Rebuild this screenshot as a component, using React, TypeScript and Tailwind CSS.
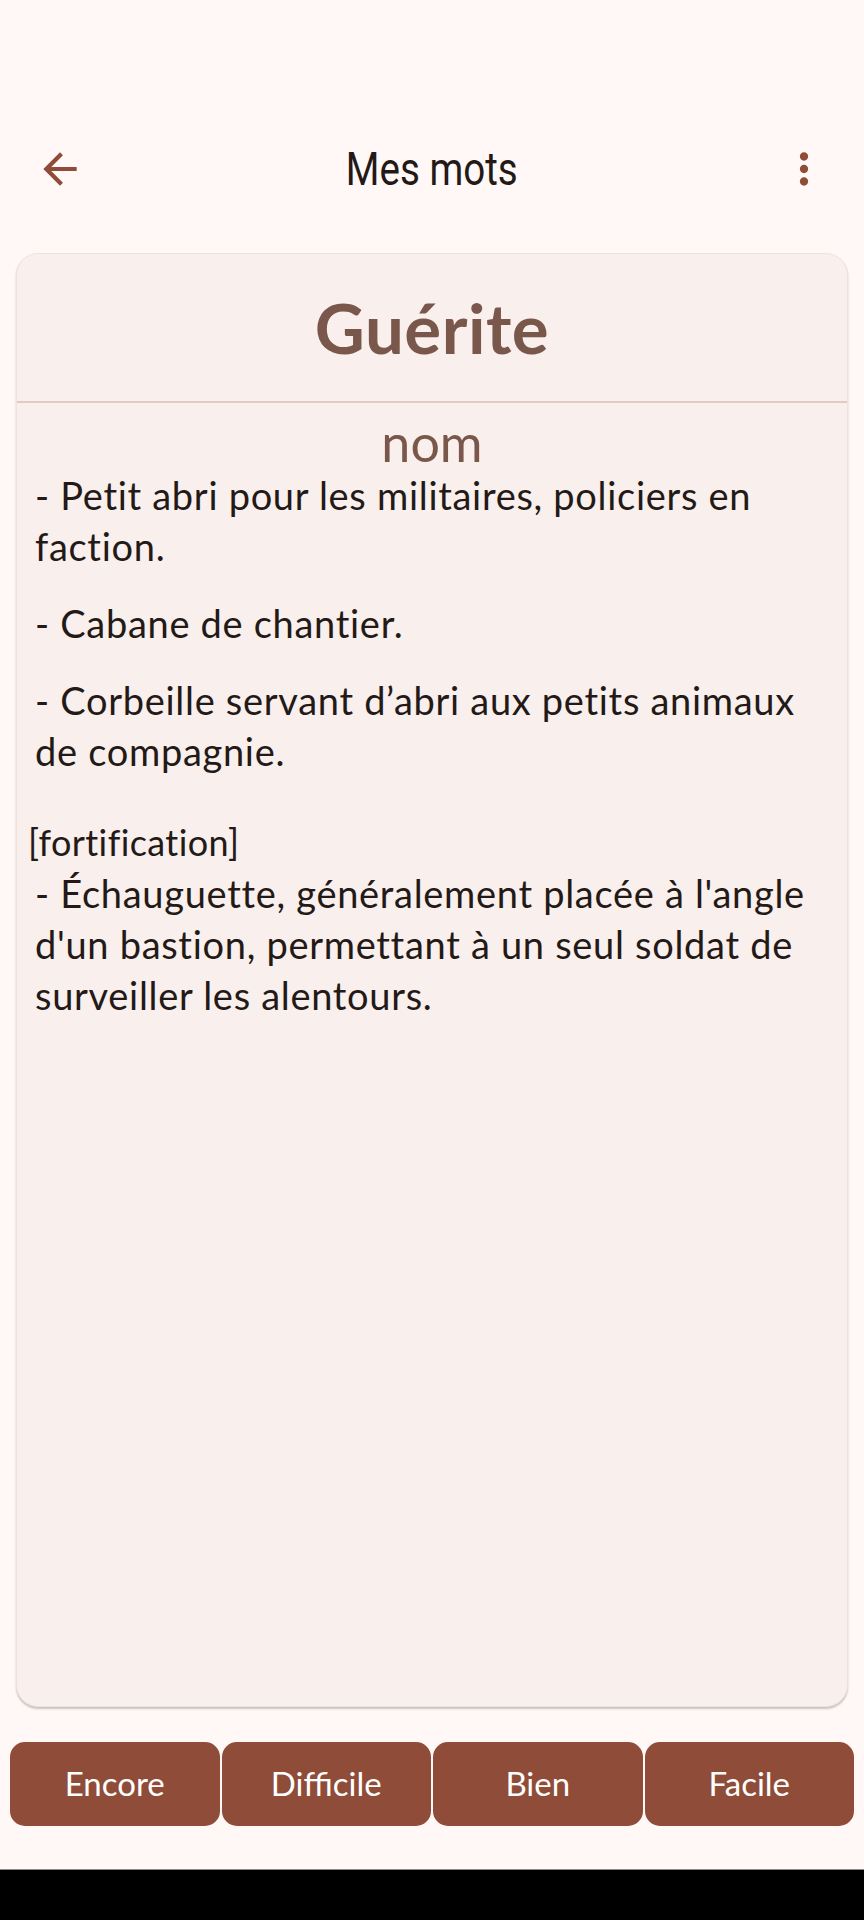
export default function App() {
  const sections = [
    {
      label: null,
      defs: [
        '- Petit abri pour les militaires, policiers en faction.',
        '- Cabane de chantier.',
        '- Corbeille servant d\u2019abri aux petits animaux de compagnie.',
      ],
    },
    {
      label: '[fortification]',
      defs: [
        "- \u00c9chauguette, g\u00e9n\u00e9ralement plac\u00e9e \u00e0 l'angle d'un bastion, permettant \u00e0 un seul soldat de surveiller les alentours.",
      ],
    },
  ];

  const buttons = ['Encore', 'Difficile', 'Bien', 'Facile'];

  return (
    <div
      className="w-[864px] h-[1920px] flex flex-col bg-[#fff8f6] overflow-hidden"
      style={{ fontFamily: 'Lato, "Noto Sans", sans-serif' }}
    >
      {/* status bar space */}
      <div className="h-[102px]"></div>

      {/* top app bar */}
      <div className="h-[134px] flex items-center justify-between px-[35px]">
        <svg width="50" height="50" viewBox="0 0 24 24" fill="#8f4c38">
          <path d="M20 11H7.83l5.59-5.59L12 4l-8 8 8 8 1.41-1.41L7.83 13H20v-2z" />
        </svg>
        <span
          className="inline-block text-[47px] leading-none text-[#231917] scale-x-[0.82] -mt-[2px]"
          style={{ fontFamily: 'Roboto, "Liberation Sans", sans-serif' }}
        >
          Mes mots
        </span>
        <svg width="50" height="50" viewBox="0 0 24 24" fill="#8f4c38">
          <path d="M12 8c1.1 0 2-.9 2-2s-.9-2-2-2-2 .9-2 2 .9 2 2 2zm0 2c-1.1 0-2 .9-2 2s.9 2 2 2 2-.9 2-2-.9-2-2-2zm0 6c-1.1 0-2 .9-2 2s.9 2 2 2 2-.9 2-2-.9-2-2-2z" />
        </svg>
      </div>

      {/* word card */}
      <div className="mt-[17px] mx-[16px] flex-1 rounded-[22px] bg-[#f9efec] border border-[#efe2de] shadow-[0_2px_2px_rgba(0,0,0,0.22)] overflow-hidden [font-variant-ligatures:none]">
        <div className="pt-[33px] pb-[32px] text-center text-[69px] leading-[82px] font-bold text-[#7a574b] tracking-[0.5px]">
          Guérite
        </div>
        <div className="h-[2px] bg-[#e2cac4]"></div>

        <div className="px-[11px]">
          <div className="mt-[11px] text-center text-[52px] leading-[56px] text-[#7a574b]">nom</div>

          {sections.map((section, i) => (
            <div key={i}>
              {section.label && (
                <div className="mt-[45px] text-[36px] leading-[40px] tracking-[0.4px] text-[#231917]">
                  {section.label}
                </div>
              )}
              {section.defs.map((def, j) => (
                <p
                  key={j}
                  className={
                    'ml-[7px] mr-[9px] text-[38px] leading-[51px] tracking-[0.7px] text-[#231917] ' +
                    (j > 0 ? 'mt-[26px]' : section.label ? 'mt-[6px]' : '')
                  }
                >
                  {def}
                </p>
              ))}
            </div>
          ))}
        </div>
      </div>

      {/* answer buttons */}
      <div className="mt-[35px] px-[10px] flex gap-[2px]">
        {buttons.map((label) => (
          <button
            key={label}
            className="flex-1 h-[84px] rounded-[15px] bg-[#8f4c38] text-white text-[33px]"
            style={{ fontFamily: 'Lato, sans-serif' }}
          >
            {label}
          </button>
        ))}
      </div>

      <div className="mt-[43px] h-[51px] bg-black border-t border-[#8a8a8a]"></div>
    </div>
  );
}
